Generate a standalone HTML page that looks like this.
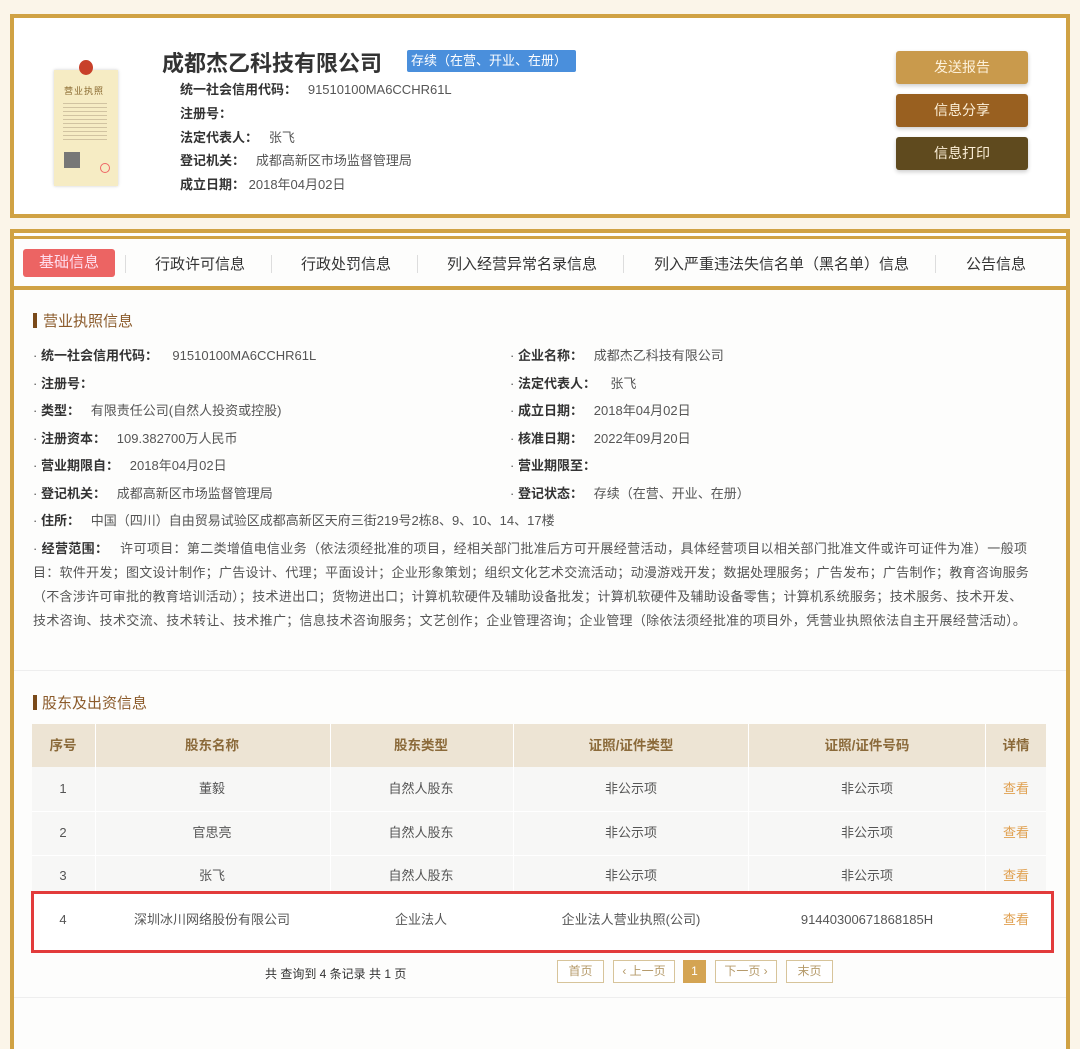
<!DOCTYPE html>
<html><head><meta charset="utf-8"><style>
*{margin:0;padding:0;box-sizing:border-box}
body{width:1080px;height:1021px;background:#fbf5e9;font-family:"Liberation Sans","Noto Sans CJK SC",sans-serif;color:#555;position:relative;overflow:hidden}
.abs{position:absolute;white-space:nowrap}
.card1{position:absolute;left:10px;top:14px;width:1060px;height:204px;background:#fff;border:4px solid #d0a244}
.card2{position:absolute;left:10px;top:229px;width:1060px;height:820px;background:#fdfdfc;border:4px solid #d0a244;border-bottom:none}
.btn{position:absolute;left:896px;width:132px;height:33px;border-radius:3px;color:#fdf0d8;font-size:14px;text-align:center;line-height:33px;box-shadow:0 2px 4px rgba(0,0,0,.2)}
.row{position:absolute;font-size:13px;white-space:nowrap;color:#555;line-height:16px}
.row b{color:#333}
.tab{position:absolute;top:253px;font-size:15px;color:#333}
.sep{position:absolute;top:255px;width:1px;height:18px;background:#ddd}
.th{position:absolute;font-size:13.5px;color:#8b6a3a;font-weight:bold;top:738px;transform:translateX(-50%);line-height:16px}
.td{position:absolute;font-size:13px;color:#555;transform:translateX(-50%);line-height:16px;white-space:nowrap}
.pg{position:absolute;top:960px;height:23px;border:1px solid #d7c49a;font-size:12px;color:#b59a6a;text-align:center;line-height:21px;background:#fff}
</style></head><body>
<div class="card1"></div>
<div class="abs" style="left:54px;top:70px;width:64px;height:116px;background:#f6ecc4;box-shadow:0 0 3px #ccc"></div>
<div class="abs" style="left:79px;top:60px;width:14px;height:15px;border-radius:50%;background:#c8402a"></div>
<div class="abs" style="left:64px;top:84px;font-size:9px;color:#8a6a30;letter-spacing:1px">营业执照</div>
<div class="abs" style="left:63px;top:100px;width:44px;height:40px;background:repeating-linear-gradient(#f6ecc4 0 3px,#b8a88a 3px 4px);opacity:.6"></div>
<div class="abs" style="left:64px;top:152px;width:16px;height:16px;background:#777"></div>
<div class="abs" style="left:100px;top:163px;width:10px;height:10px;border-radius:50%;border:1px solid #e66"></div>

<div class="abs" style="left:162px;top:46px;font-size:22px;font-weight:bold;color:#333">成都杰乙科技有限公司</div>
<div class="abs" style="left:407px;top:50px;width:169px;height:22px;background:#4a8fdc;border-radius:2px;color:#fff;font-size:13px;line-height:22px;padding-left:4px">存续（在营、开业、在册）</div>
<div class="row" style="left:180px;top:82px"><b>统一社会信用代码：</b>&nbsp;&nbsp; 91510100MA6CCHR61L</div>
<div class="row" style="left:180px;top:106px"><b>注册号：</b></div>
<div class="row" style="left:180px;top:130px"><b>法定代表人：</b>&nbsp;&nbsp; 张飞</div>
<div class="row" style="left:180px;top:153px"><b>登记机关：</b>&nbsp;&nbsp; 成都高新区市场监督管理局</div>
<div class="row" style="left:180px;top:177px"><b>成立日期：</b> 2018年04月02日</div>
<div class="btn" style="top:51px;background:#c99a4c">发送报告</div>
<div class="btn" style="top:94px;background:#996020">信息分享</div>
<div class="btn" style="top:137px;background:#5f4a1e">信息打印</div>

<div class="card2"></div>
<div class="abs" style="left:14px;top:236px;width:1052px;height:3px;background:#d0a244"></div>
<div class="abs" style="left:14px;top:286px;width:1052px;height:4px;background:#d0a244"></div>
<div class="abs" style="left:23px;top:249px;width:92px;height:28px;background:#ec6463;border-radius:3px;color:#fde;font-size:15px;text-align:center;line-height:28px">基础信息</div>
<div class="sep" style="left:125px"></div>
<div class="tab" style="left:155px">行政许可信息</div>
<div class="sep" style="left:271px"></div>
<div class="tab" style="left:301px">行政处罚信息</div>
<div class="sep" style="left:417px"></div>
<div class="tab" style="left:447px">列入经营异常名录信息</div>
<div class="sep" style="left:623px"></div>
<div class="tab" style="left:654px">列入严重违法失信名单（黑名单）信息</div>
<div class="sep" style="left:935px"></div>
<div class="tab" style="left:966px">公告信息</div>

<div class="abs" style="left:33px;top:313px;width:4px;height:15px;background:#7a4a1a"></div>
<div class="abs" style="left:43px;top:310px;font-size:15px;color:#8b5a2a">营业执照信息</div>

<div class="row" style="left:33px;top:348px">· <b>统一社会信用代码：</b>&nbsp;&nbsp;&nbsp; 91510100MA6CCHR61L</div>
<div class="row" style="left:33px;top:376px">· <b>注册号：</b></div>
<div class="row" style="left:33px;top:403px">· <b>类型：</b>&nbsp;&nbsp; 有限责任公司(自然人投资或控股)</div>
<div class="row" style="left:33px;top:431px">· <b>注册资本：</b>&nbsp;&nbsp; 109.382700万人民币</div>
<div class="row" style="left:33px;top:458px">· <b>营业期限自：</b>&nbsp;&nbsp; 2018年04月02日</div>
<div class="row" style="left:33px;top:486px">· <b>登记机关：</b>&nbsp;&nbsp; 成都高新区市场监督管理局</div>
<div class="row" style="left:33px;top:513px">· <b>住所：</b>&nbsp;&nbsp; 中国（四川）自由贸易试验区成都高新区天府三街219号2栋8、9、10、14、17楼</div>
<div class="row" style="left:510px;top:348px">· <b>企业名称：</b>&nbsp;&nbsp; 成都杰乙科技有限公司</div>
<div class="row" style="left:510px;top:376px">· <b>法定代表人：</b>&nbsp;&nbsp;&nbsp; 张飞</div>
<div class="row" style="left:510px;top:403px">· <b>成立日期：</b>&nbsp;&nbsp; 2018年04月02日</div>
<div class="row" style="left:510px;top:431px">· <b>核准日期：</b>&nbsp;&nbsp; 2022年09月20日</div>
<div class="row" style="left:510px;top:458px">· <b>营业期限至：</b></div>
<div class="row" style="left:510px;top:486px">· <b>登记状态：</b>&nbsp;&nbsp; 存续（在营、开业、在册）</div>
<div class="row" style="left:33px;top:541px;letter-spacing:.34px">· <b>经营范围：</b>&nbsp;&nbsp; 许可项目：第二类增值电信业务（依法须经批准的项目，经相关部门批准后方可开展经营活动，具体经营项目以相关部门批准文件或许可证件为准）一般项</div>
<div class="row" style="left:33px;top:565px;letter-spacing:.28px">目：软件开发；图文设计制作；广告设计、代理；平面设计；企业形象策划；组织文化艺术交流活动；动漫游戏开发；数据处理服务；广告发布；广告制作；教育咨询服务</div>
<div class="row" style="left:33px;top:589px;letter-spacing:.28px">（不含涉许可审批的教育培训活动）；技术进出口；货物进出口；计算机软硬件及辅助设备批发；计算机软硬件及辅助设备零售；计算机系统服务；技术服务、技术开发、</div>
<div class="row" style="left:33px;top:613px;letter-spacing:.33px">技术咨询、技术交流、技术转让、技术推广；信息技术咨询服务；文艺创作；企业管理咨询；企业管理（除依法须经批准的项目外，凭营业执照依法自主开展经营活动）。</div>

<div class="abs" style="left:14px;top:670px;width:1052px;height:1px;background:#eee"></div>
<div class="abs" style="left:33px;top:695px;width:4px;height:15px;background:#7a4a1a"></div>
<div class="abs" style="left:42px;top:692px;font-size:15px;color:#8b5a2a">股东及出资信息</div>

<div class="abs" style="left:32px;top:724px;width:1014px;height:43px;background:#ede4d4"></div>
<div class="abs" style="left:32px;top:767px;width:1014px;height:176px;background:#f7f7f6"></div>
<div class="abs" style="left:95px;top:724px;width:1px;height:176px;background:#fff"></div>
<div class="abs" style="left:330px;top:724px;width:1px;height:176px;background:#fff"></div>
<div class="abs" style="left:513px;top:724px;width:1px;height:176px;background:#fff"></div>
<div class="abs" style="left:748px;top:724px;width:1px;height:176px;background:#fff"></div>
<div class="abs" style="left:985px;top:724px;width:1px;height:176px;background:#fff"></div>
<div class="abs" style="left:32px;top:811px;width:1014px;height:1px;background:#fff"></div>
<div class="abs" style="left:32px;top:855px;width:1014px;height:1px;background:#fff"></div>
<div class="th" style="left:63px">序号</div><div class="th" style="left:212px">股东名称</div><div class="th" style="left:421px">股东类型</div><div class="th" style="left:631px">证照/证件类型</div><div class="th" style="left:867px">证照/证件号码</div><div class="th" style="left:1016px">详情</div>

<div class="td" style="left:63px;top:781px">1</div><div class="td" style="left:212px;top:781px">董毅</div><div class="td" style="left:421px;top:781px">自然人股东</div><div class="td" style="left:631px;top:781px">非公示项</div><div class="td" style="left:867px;top:781px">非公示项</div><div class="td" style="left:1016px;top:781px;color:#e0a050">查看</div>
<div class="td" style="left:63px;top:825px">2</div><div class="td" style="left:212px;top:825px">官思亮</div><div class="td" style="left:421px;top:825px">自然人股东</div><div class="td" style="left:631px;top:825px">非公示项</div><div class="td" style="left:867px;top:825px">非公示项</div><div class="td" style="left:1016px;top:825px;color:#e0a050">查看</div>
<div class="td" style="left:63px;top:868px">3</div><div class="td" style="left:212px;top:868px">张飞</div><div class="td" style="left:421px;top:868px">自然人股东</div><div class="td" style="left:631px;top:868px">非公示项</div><div class="td" style="left:867px;top:868px">非公示项</div><div class="td" style="left:1016px;top:868px;color:#e0a050">查看</div>
<div class="abs" style="left:31px;top:891px;width:1023px;height:62px;border:3px solid #e23b3b;background:#fff"></div>
<div class="td" style="left:63px;top:912px">4</div><div class="td" style="left:212px;top:912px">深圳冰川网络股份有限公司</div><div class="td" style="left:421px;top:912px">企业法人</div><div class="td" style="left:631px;top:912px">企业法人营业执照(公司)</div><div class="td" style="left:867px;top:912px">91440300671868185H</div><div class="td" style="left:1016px;top:912px;color:#e0a050">查看</div>

<div class="abs" style="left:265px;top:965px;font-size:12px;color:#333">共 查询到 4 条记录 共 1 页</div>
<div class="pg" style="left:557px;width:47px">首页</div>
<div class="pg" style="left:613px;width:62px">‹ 上一页</div>
<div class="pg" style="left:683px;width:23px;background:#d4a452;border-color:#d4a452;color:#fff">1</div>
<div class="pg" style="left:715px;width:62px">下一页 ›</div>
<div class="pg" style="left:786px;width:47px">末页</div>
<div class="abs" style="left:14px;top:997px;width:1052px;height:1px;background:#eee"></div>
</body></html>
